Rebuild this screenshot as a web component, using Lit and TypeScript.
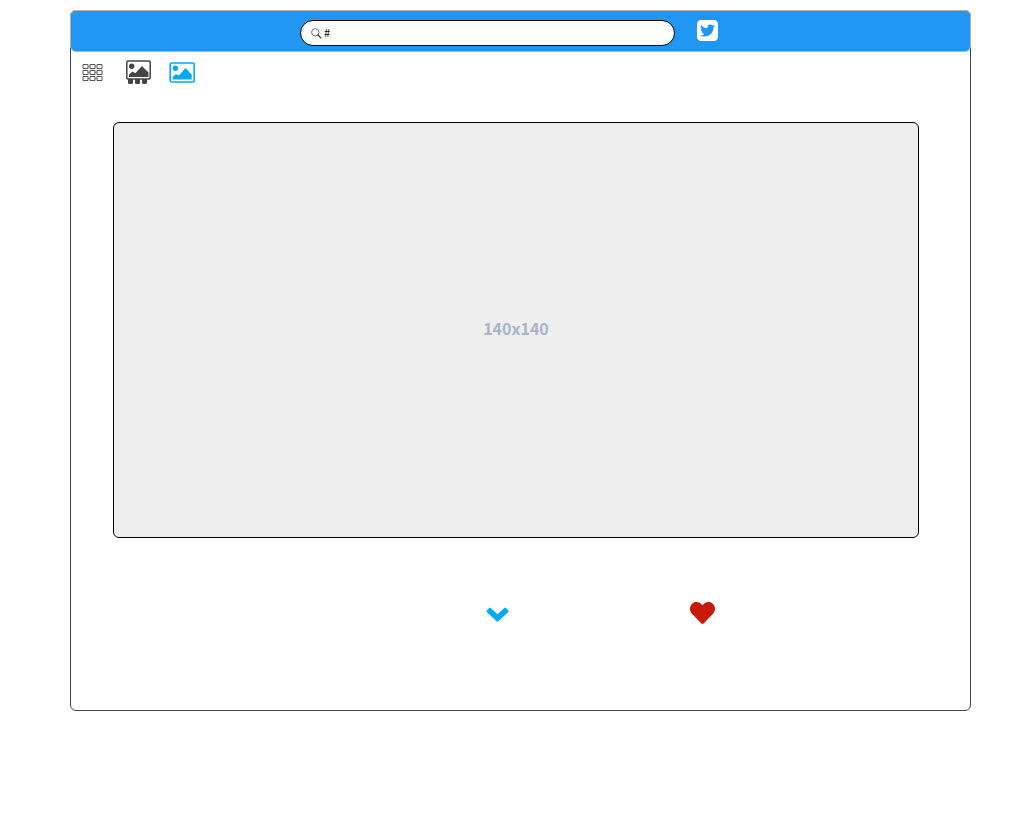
import { LitElement, html, css } from "lit";
import { customElement, state } from "lit/decorators.js";

@customElement("app-root")
export class AppRoot extends LitElement {
  @state() private query = "#";

  static styles = css`
    :host {
      display: block;
      padding: 10px 60px 40px 70px;
      font-family: "Noto Sans CJK JP", "Noto Sans", sans-serif;
      color: #000;
    }
    * {
      box-sizing: border-box;
    }
    .window {
      border: 1px solid #444;
      border-radius: 6px;
      background: #fff;
      padding-bottom: 86px;
    }
    .bar {
      margin: -1px -1px 0;
      height: 42px;
      border: 1px solid #b3b3b3;
      border-radius: 6px;
      background: #2196f3;
      display: grid;
      grid-template-columns: 9fr 375px 21px 10fr;
      column-gap: 22px;
      padding-top: 9px;
      align-items: start;
    }
    .search {
      grid-column: 2;
      display: flex;
      align-items: center;
      gap: 2px;
      height: 26px;
      padding: 0 10px;
      border: 1px solid #000;
      border-radius: 13px;
      background: #fff;
    }
    .search input {
      flex: 1;
      min-width: 0;
      height: 20px;
      padding: 0 0 2px;
      border: 0;
      outline: 0;
      background: none;
      color: #000;
      font: 11px/18px "Noto Sans CJK JP", "Noto Sans", sans-serif;
    }
    svg {
      display: block;
    }
    button,
    .link {
      display: block;
      padding: 0;
      border: 0;
      background: none;
      color: inherit;
      cursor: pointer;
    }
    .views {
      display: flex;
      align-items: center;
      height: 24px;
      margin: 8px 11px 0;
      color: #444;
    }
    .strip {
      margin-left: 22px;
    }
    .single {
      margin-left: 18px;
      color: #03a9f4;
    }
    .photo {
      display: flex;
      align-items: center;
      justify-content: center;
      height: 416px;
      margin: 38px 51px 0 42px;
      padding-bottom: 4px;
      border: 1px solid #000;
      border-radius: 6px;
      background: #eee;
      color: #a9b4c8;
      font-size: 16px;
      line-height: 24px;
      font-weight: 700;
    }
    .actions {
      display: grid;
      grid-template-columns: 13fr 23px 206px 8fr;
      align-items: center;
      height: 22px;
      margin-top: 64px;
    }
    .next {
      grid-column: 2;
      color: #03a9f4;
      padding-top: 3px;
    }
    .like {
      justify-self: end;
      color: #c8190b;
    }
  `;

  private onInput(e: Event) {
    this.query = (e.target as HTMLInputElement).value;
  }

  render() {
    const cells = [0, 1, 2].flatMap((r) => [0, 1, 2].map((c) => [c * 7 + 0.5, r * 6]));
    const grid = cells.map(([x, y]) => `M${x + 0.5} ${y + 0.5}h5v4h-5z`).join("");
    return html`
      <main class="window">
        <header class="bar">
          <label class="search">
            <svg width="11" height="11" viewBox="0 0 11 11" fill="none" stroke="#333" aria-hidden="true">
              <circle cx="4.3" cy="4.3" r="3.7" stroke-width=".7" />
              <path d="M7 7l3 3" stroke-width="1.100" stroke-linecap="round" />
            </svg>
            <input type="text" aria-label="Search" .value=${this.query} @input=${this.onInput} />
          </label>
          <a class="link" href="#" aria-label="Twitter">
            <svg width="21" height="21" viewBox="0 32 448 448" fill="#fff">
              <path
                d="M364 32H84C37.600 32 0 69.600 0 116v280c0 46.400 37.600 84 84 84h280c46.400 0 84-37.600 84-84V116c0-46.400-37.600-84-84-84zm-12.900 158.800c.2 2.800.2 5.700.2 8.500 0 86.700-66 186.600-186.600 186.600-37.200 0-71.700-10.800-100.700-29.400 5.300.6 10.400.8 15.800.8 30.700 0 58.900-10.400 81.400-28-28.800-.6-53-19.500-61.300-45.500 10.100 1.500 19.200 1.500 29.600-1.200-30-6.100-52.500-32.500-52.500-64.400v-.8c8.700 4.900 18.900 7.900 29.600 8.300a65.447 65.447 0 0 1-29.200-54.600c0-12.200 3.200-23.400 8.900-33.100 32.300 39.800 80.800 65.800 135.200 68.600-9.300-44.500 24-80.600 64-80.600 18.900 0 35.900 7.900 47.900 20.700 14.800-2.800 29-8.300 41.600-15.800-4.900 15.200-15.200 28-28.800 36.100 13.200-1.400 26-5.100 37.800-10.200-8.900 13.100-20.100 24.700-32.900 34z"
              />
            </svg>
          </a>
        </header>
        <nav class="views" aria-label="View">
          <button type="button" aria-label="Grid view">
            <svg width="22" height="17" viewBox="0 0 22 17" fill="none" stroke="#555">
              <path d="M5 2.500h12M5 8.500h12M5 14.500h12" stroke="#bbb" />
              <path d="${grid}" fill="#fff" />
            </svg>
          </button>
          <button class="strip" type="button" aria-label="Filmstrip view">
            <svg width="25" height="24" viewBox="0 0 25 24">
              <rect x=".8" y="1" width="23.400" height="18" rx="1.200" fill="none" stroke="currentColor" stroke-width="1.500" />
              <circle cx="5.700" cy="6.200" r="2.700" fill="currentColor" />
              <path d="M3 17v-2.500l3.500-3 2.800 1.800L16 6l6.500 6.500V17z" fill="currentColor" />
              <path
                d="M2 19h5v3.500q0 1.500-1.500 1.500h-2Q2 24 2 22.500zM9 19h5v3.500q0 1.500-1.500 1.500h-2Q9 24 9 22.500zM16 19h5v3.500q0 1.500-1.500 1.500h-2q-1.500 0-1.500-1.500z"
                fill="currentColor"
              />
            </svg>
          </button>
          <button class="single" type="button" aria-label="Single view" aria-pressed="true">
            <svg width="26" height="21" viewBox="0 0 26 21">
              <rect x="1.200" y="1" width="24" height="19" rx="1.500" fill="none" stroke="currentColor" stroke-width="1.600" />
              <circle cx="6.400" cy="6.200" r="2.700" fill="currentColor" />
              <path d="M3.700 17.500V15L7 12l2.800 1.500 6.700-7.500 6.200 6.500v5z" fill="currentColor" />
            </svg>
          </button>
        </nav>
        <div class="photo">140x140</div>
        <div class="actions">
          <button class="next" type="button" aria-label="Next">
            <svg width="23" height="15" viewBox="0 0 23 15" fill="currentColor">
              <path
                d="M10.600 14.300L.7 5Q0 4.200.7 3.400L3.200.9Q4 .2 4.800.9L11.500 7.300 18.200.9Q19 .2 19.800.9L22.300 3.400Q23 4.200 22.300 5L12.400 14.300Q11.500 15 10.600 14.300z"
              />
            </svg>
          </button>
          <button class="like" type="button" aria-label="Like">
            <svg width="25" height="22" viewBox="0 0 512 450" fill="currentColor">
              <path
                d="M462.300 31.600C407.500-15.100 326-6.700 275.700 45.200L256 65.500 236.300 45.200C186.100-6.700 104.500-15.100 49.700 31.600c-62.800 53.600-66.100 149.800-9.900 207.900l193.500 199.800c12.500 12.900 32.800 12.900 45.300 0l193.500-199.800c56.300-58.100 53-154.300-9.800-207.900z"
              />
            </svg>
          </button>
        </div>
      </main>
    `;
  }
}
